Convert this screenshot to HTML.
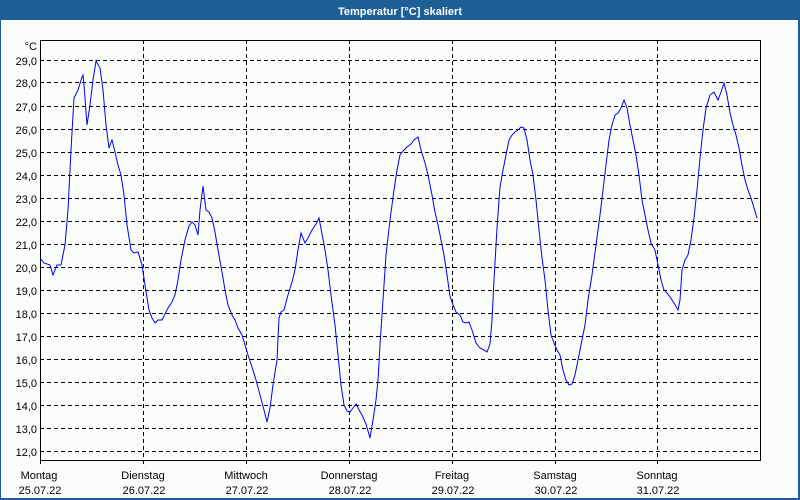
<!DOCTYPE html>
<html><head><meta charset="utf-8"><style>
html,body{margin:0;padding:0;}
body{width:800px;height:500px;overflow:hidden;background:#fbfdfb;font-family:"Liberation Sans",Tahoma,sans-serif;}
</style></head><body>
<svg width="800" height="500" xmlns="http://www.w3.org/2000/svg" style="display:block">
<rect x="0" y="0" width="800" height="500" fill="#1c5e95"/>
<rect x="1" y="20" width="797" height="478" fill="#fbfdfb"/>
<text x="400" y="15" fill="#fff" font-size="11" font-weight="bold" text-anchor="middle" font-family="Liberation Sans, sans-serif">Temperatur [°C] skaliert</text>
<g stroke="#000" stroke-width="1" stroke-dasharray="4,3" shape-rendering="crispEdges">
<line x1="40" x2="760" y1="60.5" y2="60.5"/><line x1="40" x2="760" y1="82.5" y2="82.5"/><line x1="40" x2="760" y1="106.5" y2="106.5"/><line x1="40" x2="760" y1="129.5" y2="129.5"/><line x1="40" x2="760" y1="152.5" y2="152.5"/><line x1="40" x2="760" y1="175.5" y2="175.5"/><line x1="40" x2="760" y1="198.5" y2="198.5"/><line x1="40" x2="760" y1="221.5" y2="221.5"/><line x1="40" x2="760" y1="244.5" y2="244.5"/><line x1="40" x2="760" y1="267.5" y2="267.5"/><line x1="40" x2="760" y1="290.5" y2="290.5"/><line x1="40" x2="760" y1="313.5" y2="313.5"/><line x1="40" x2="760" y1="336.5" y2="336.5"/><line x1="40" x2="760" y1="359.5" y2="359.5"/><line x1="40" x2="760" y1="382.5" y2="382.5"/><line x1="40" x2="760" y1="405.5" y2="405.5"/><line x1="40" x2="760" y1="428.5" y2="428.5"/><line x1="40" x2="760" y1="451.5" y2="451.5"/>
<line y1="40" y2="464" x1="143.5" x2="143.5"/><line y1="40" y2="464" x1="246.5" x2="246.5"/><line y1="40" y2="464" x1="349.5" x2="349.5"/><line y1="40" y2="464" x1="452.5" x2="452.5"/><line y1="40" y2="464" x1="555.5" x2="555.5"/><line y1="40" y2="464" x1="657.5" x2="657.5"/>
</g>
<path d="M40.5 40.5H760.5V460.5H40.5Z M40.5 460.5V464" fill="none" stroke="#000" stroke-width="1" shape-rendering="crispEdges"/>
<g font-size="11" fill="#000" text-anchor="end">
<text x="37" y="50">°C</text>
<text x="37" y="65">29,0</text><text x="37" y="87">28,0</text><text x="37" y="111">27,0</text><text x="37" y="134">26,0</text><text x="37" y="157">25,0</text><text x="37" y="180">24,0</text><text x="37" y="203">23,0</text><text x="37" y="226">22,0</text><text x="37" y="249">21,0</text><text x="37" y="272">20,0</text><text x="37" y="295">19,0</text><text x="37" y="318">18,0</text><text x="37" y="341">17,0</text><text x="37" y="364">16,0</text><text x="37" y="387">15,0</text><text x="37" y="410">14,0</text><text x="37" y="433">13,0</text><text x="37" y="456">12,0</text>
</g>
<g font-size="11" fill="#000" text-anchor="middle">
<text x="39" y="479">Montag</text><text x="40" y="494">25.07.22</text>
<text x="143" y="479">Dienstag</text><text x="144" y="494">26.07.22</text>
<text x="246" y="479">Mittwoch</text><text x="247" y="494">27.07.22</text>
<text x="349" y="479">Donnerstag</text><text x="350" y="494">28.07.22</text>
<text x="452" y="479">Freitag</text><text x="453" y="494">29.07.22</text>
<text x="555" y="479">Samstag</text><text x="556" y="494">30.07.22</text>
<text x="657" y="479">Sonntag</text><text x="658" y="494">31.07.22</text>
</g>
<polyline fill="none" stroke="#0000ee" stroke-width="1" points="40,258 44,263 50,265 53,275 57,265 61,265 65,245 68,210 71,150 74,98 78,90 82,77 83,75 84,85 87,125 90,105 93,80 96,61 100,68 103,90 106,125 109,148 112,140 115,152 118,165 121,175 124,195 127,225 131,250 134,253 138,252 142,265 145,285 149,310 152,318 155,323 158,320 162,320 165,314 168,308 172,302 175,295 178,280 181,260 185,240 189,226 192,222 195,225 198,235 200,210 203,186 206,210 209,212 212,218 215,232 218,250 222,272 225,290 228,305 232,315 235,320 238,328 242,335 245,345 248,355 252,367 256,380 260,395 264,410 267,422 270,408 273,385 277,360 279,318 281,312 284,310 288,295 292,282 295,270 298,250 301,233 305,243 308,238 312,230 316,224 319,218 322,234 325,250 328,270 331,295 335,325 338,355 341,385 344,405 347,411 350,412 353,408 356,404 359,410 362,415 366,424 370,438 373,420 376,400 378,380 380,345 383,300 386,255 390,220 394,190 397,170 400,155 404,150 407,147 411,144 414,140 418,137 421,150 425,163 428,175 432,195 435,212 438,225 441,240 444,255 447,275 450,296 453,305 456,312 460,315 463,322 466,323 469,322 472,330 476,343 480,348 484,350 487,352 490,344 492,320 494,280 497,228 500,187 503,170 506,155 509,140 512,135 515,132 518,130 521,127 524,128 527,140 530,160 533,175 536,200 539,230 542,258 545,280 548,310 551,335 554,343 557,350 560,355 563,370 566,380 569,385 572,384 575,375 578,360 581,345 585,325 588,300 592,275 596,245 600,215 603,190 606,165 609,140 612,125 615,115 618,113 621,108 624,100 627,108 630,125 633,140 636,155 639,175 642,200 645,215 648,230 651,243 655,250 658,265 661,280 664,290 667,293 670,297 674,303 678,310 680,300 682,270 685,260 688,255 691,240 694,218 697,190 700,158 703,130 706,108 710,95 714,92 718,100 721,92 724,83 727,95 730,113 733,125 736,135 739,148 742,165 745,180 748,190 751,198 754,208 757,218"/>
</svg>
</body></html>
